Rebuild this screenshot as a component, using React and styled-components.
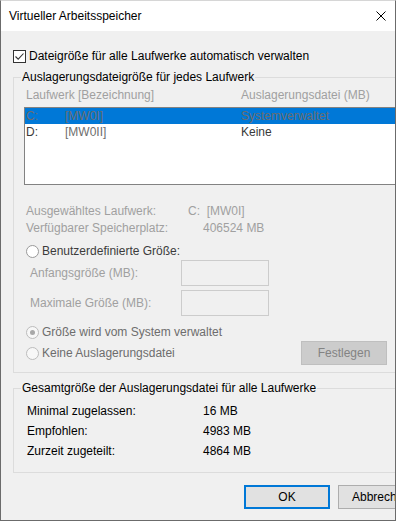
import React from "react";
import styled, { createGlobalStyle } from "styled-components";

const GlobalStyle = createGlobalStyle`
  html, body {
    margin: 0;
    padding: 0;
    background: #ffffff;
  }
  body {
    font-family: "Liberation Sans", Arial, sans-serif;
    font-size: 12px;
    color: #000000;
  }
`;

const Window = styled.div`
  width: 396px;
  height: 521px;
  box-sizing: border-box;
  border: 1px solid #6b6b6b;
  border-top-color: #d6d6d6;
  display: flex;
  flex-direction: column;
  overflow: hidden;
`;

const TitleBar = styled.div`
  height: 30px;
  flex: none;
  background: #ffffff;
  display: flex;
  align-items: center;
  justify-content: space-between;
  padding: 0 9px 0 8px;
`;

const Title = styled.span`
  line-height: 16px;
`;

const Body = styled.div`
  flex: 1;
  background: #f0f0f0;
  padding: 17px 0 0 12px;
  display: flex;
  flex-direction: column;
  align-items: flex-start;
  overflow: hidden;
`;

const CheckRow = styled.label`
  display: flex;
  align-items: center;
  gap: 3px;
  height: 16px;
  line-height: 16px;
  white-space: nowrap;
`;

const CheckBox = styled.span`
  width: 13px;
  height: 13px;
  box-sizing: border-box;
  border: 1px solid #333333;
  background: #ffffff;
  display: flex;
  align-items: center;
  justify-content: center;
`;

const GroupBox = styled.fieldset`
  width: 420px;
  min-width: 0;
  box-sizing: border-box;
  margin: ${(p) => p.$top}px 0 0 0;
  padding: 0 0 ${(p) => p.$bottom}px ${(p) => p.$left}px;
  border: 1px solid #dcdcdc;
`;

const Legend = styled.legend`
  margin-left: ${(p) => p.$shift}px;
  padding: 0 1px;
  line-height: 16px;
  color: #000000;
`;

const ColumnHeader = styled.div`
  display: grid;
  grid-template-columns: 215px 1fr;
  margin-top: 2px;
  padding-left: 2px;
  line-height: 16px;
  color: #a0a0a0;
  white-space: nowrap;
`;

const ListBox = styled.div`
  width: 380px;
  height: 78px;
  box-sizing: border-box;
  margin-top: 4px;
  border: 1px solid #828282;
  background: #ffffff;
`;

const ListRow = styled.div`
  display: grid;
  grid-template-columns: 39px 176px 1fr;
  height: 16px;
  line-height: 16px;
  padding-left: 1px;
  white-space: nowrap;
  background: ${(p) => (p.$selected ? "#0078d7" : "transparent")};
  color: ${(p) => (p.$selected ? "#6d6d6d" : "#3a3a3a")};
`;

const Cell = styled.span`
  color: ${(p) => p.$color || "inherit"};
`;

const InfoGrid = styled.div`
  display: grid;
  grid-template-columns: 162px 1fr;
  margin-top: 18px;
  padding-left: 2px;
  line-height: 17px;
  color: #a0a0a0;
  white-space: nowrap;
`;

const InfoValue = styled.span`
  padding-left: ${(p) => p.$indent || 0}px;
`;

const RadioRow = styled.label`
  display: flex;
  align-items: center;
  gap: 3px;
  height: 16px;
  line-height: 16px;
  margin-top: ${(p) => p.$top || 0}px;
  padding-left: 2px;
  white-space: nowrap;
  color: ${(p) => p.$color};
`;

const Radio = styled.span`
  width: 13px;
  height: 13px;
  box-sizing: border-box;
  border-radius: 50%;
  border: 1px solid ${(p) => (p.$enabled ? "#9a9a9a" : "#bcbcbc")};
  background: ${(p) => (p.$enabled ? "#ffffff" : "#f7f7f7")};
  display: flex;
  align-items: center;
  justify-content: center;

  &::after {
    content: "";
    width: 5px;
    height: 5px;
    border-radius: 50%;
    background: ${(p) => (p.$checked ? "#a8a8a8" : "transparent")};
  }
`;

const SizeRow = styled.div`
  display: flex;
  align-items: center;
  height: 26px;
  margin-top: ${(p) => p.$top}px;
  padding-left: 6px;
  white-space: nowrap;
`;

const SizeLabel = styled.span`
  width: 151px;
  color: #a0a0a0;
  line-height: 16px;
`;

const TextBox = styled.span`
  width: 88px;
  height: 26px;
  box-sizing: border-box;
  border: 1px solid #cccccc;
  background: #f0f0f0;
`;

const ActionRow = styled.div`
  width: 363px;
  height: 24px;
  margin-top: 1px;
  display: flex;
  align-items: center;
  justify-content: space-between;
`;

const PushButton = styled.button`
  width: 86px;
  height: 24px;
  box-sizing: border-box;
  padding: 0;
  font: inherit;
  background: ${(p) => (p.$disabled ? "#cccccc" : "#e1e1e1")};
  color: ${(p) => (p.$disabled ? "#838383" : "#000000")};
  border: ${(p) =>
    p.$default
      ? "2px solid #0078d7"
      : p.$disabled
      ? "1px solid #bfbfbf"
      : "1px solid #adadad"};
  white-space: nowrap;
  flex: none;
`;

const StatsGrid = styled.div`
  display: grid;
  grid-template-columns: 176px 1fr;
  row-gap: 4px;
  margin-top: 7px;
  line-height: 16px;
  white-space: nowrap;
`;

const ButtonRow = styled.div`
  width: 411px;
  margin-top: 12px;
  display: flex;
  justify-content: flex-end;
  gap: 8px;
`;

const drives = [
  { letter: "C:", label: "[MW0I]", file: "Systemverwaltet", selected: true },
  { letter: "D:", label: "[MW0II]", file: "Keine", selected: false },
];

const stats = [
  ["Minimal zugelassen:", "16 MB"],
  ["Empfohlen:", "4983 MB"],
  ["Zurzeit zugeteilt:", "4864 MB"],
];

const App = () => {
  return (
    <>
      <GlobalStyle />
      <Window>
        <TitleBar>
          <Title>Virtueller Arbeitsspeicher</Title>
          <svg width="10" height="10" viewBox="0 0 10 10">
            <path d="M0.5 0.5 L9.5 9.5 M9.5 0.5 L0.5 9.5" stroke="#000" strokeWidth="1" fill="none" />
          </svg>
        </TitleBar>

        <Body>
          <CheckRow>
            <CheckBox>
              <svg width="11" height="11" viewBox="0 0 11 11">
                <path d="M1.5 5.5 L4.2 8.2 L9.5 2.5" stroke="#333" strokeWidth="1.1" fill="none" />
              </svg>
            </CheckBox>
            Dateigröße für alle Laufwerke automatisch verwalten
          </CheckRow>

          {/* Laufwerke */}
          <GroupBox $top={5} $left={10} $bottom={7}>
            <Legend $shift={-3}>Auslagerungsdateigröße für jedes Laufwerk</Legend>
            <ColumnHeader>
              <span>Laufwerk [Bezeichnung]</span>
              <span>Auslagerungsdatei (MB)</span>
            </ColumnHeader>
            <ListBox>
              {drives.map((d) => (
                <ListRow key={d.letter} $selected={d.selected}>
                  <Cell>{d.letter}</Cell>
                  <Cell $color={d.selected ? null : "#6d6d6d"}>{d.label}</Cell>
                  <Cell>{d.file}</Cell>
                </ListRow>
              ))}
            </ListBox>

            <InfoGrid>
              <span>Ausgewähltes Laufwerk:</span>
              <InfoValue>C:&nbsp; [MW0I]</InfoValue>
              <span>Verfügbarer Speicherplatz:</span>
              <InfoValue $indent={15}>406524 MB</InfoValue>
            </InfoGrid>

            <RadioRow $top={6} $color="#3c3c3c">
              <Radio $enabled />
              Benutzerdefinierte Größe:
            </RadioRow>
            <SizeRow $top={1}>
              <SizeLabel>Anfangsgröße (MB):</SizeLabel>
              <TextBox />
            </SizeRow>
            <SizeRow $top={4}>
              <SizeLabel>Maximale Größe (MB):</SizeLabel>
              <TextBox />
            </SizeRow>

            <RadioRow $top={8} $color="#6d6d6d">
              <Radio $checked />
              Größe wird vom System verwaltet
            </RadioRow>
            <ActionRow>
              <RadioRow $color="#6d6d6d">
                <Radio />
                Keine Auslagerungsdatei
              </RadioRow>
              <PushButton $disabled>Festlegen</PushButton>
            </ActionRow>
          </GroupBox>

          {/* Gesamt */}
          <GroupBox $top={7} $left={13} $bottom={13}>
            <Legend $shift={-6}>Gesamtgröße der Auslagerungsdatei für alle Laufwerke</Legend>
            <StatsGrid>
              {stats.map(([label, value]) => (
                <React.Fragment key={label}>
                  <span>{label}</span>
                  <span>{value}</span>
                </React.Fragment>
              ))}
            </StatsGrid>
          </GroupBox>

          <ButtonRow>
            <PushButton $default>OK</PushButton>
            <PushButton>Abbrechen</PushButton>
          </ButtonRow>
        </Body>
      </Window>
    </>
  );
};

export default App;
